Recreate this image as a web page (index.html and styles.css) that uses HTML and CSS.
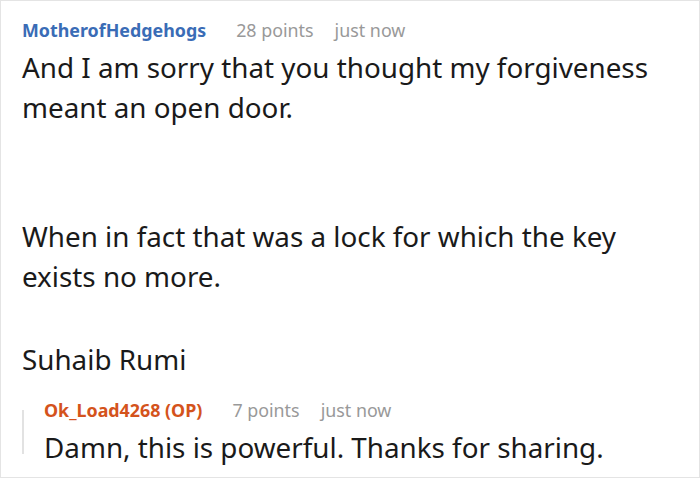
FILE: index.html
```html
<!DOCTYPE html>
<html lang="en">
<head>
<meta charset="utf-8">
<title>Comment</title>
<link rel="stylesheet" href="styles.css">
</head>
<body>
<div class="frame">
  <div class="comment">
    <div class="meta">
      <span class="author">MotherofHedgehogs</span>
      <span class="points">28 points</span>
      <span class="time">just now</span>
    </div>
    <div class="body">
      <p>And I am sorry that you thought my forgiveness meant an open door.</p>
      <p class="gap-lg">When in fact that was a lock for which the key exists no more.</p>
      <p class="gap">Suhaib Rumi</p>
    </div>
    <div class="reply">
      <div class="thread-line"></div>
      <div class="reply-content">
        <div class="meta">
          <span class="author op">Ok_Load4268 (OP)</span>
          <span class="points">7 points</span>
          <span class="time">just now</span>
        </div>
        <div class="body">
          <p>Damn, this is powerful. Thanks for sharing.</p>
        </div>
      </div>
    </div>
  </div>
</div>
</body>
</html>
```
FILE: styles.css
```css
html, body {
  margin: 0;
  padding: 0;
  background: #fff;
}

.frame {
  width: 700px;
  height: 478px;
  box-sizing: border-box;
  border: 1px solid #e4e4e4;
  padding: 17px 22px 0 21px;
  font-family: "Noto Sans", "Open Sans", sans-serif;
  overflow: hidden;
}

.meta {
  display: flex;
  align-items: baseline;
  font-size: 17.85px;
  line-height: 24px;
  height: 24px;
  white-space: nowrap;
}

.author {
  font-weight: 700;
  color: #3a6cb6;
}

.author.op {
  color: #d4531c;
}

.points {
  color: #999;
  margin-left: 30px;
}

.time {
  color: #999;
  margin-left: 21px;
}

.body {
  margin-top: 5px;
  font-size: 27.8px;
  line-height: 40px;
  color: #1a1a1a;
}

.body p {
  margin: 0;
}

.body p.gap-lg {
  margin-top: 89px;
}

.body p.gap {
  margin-top: 43px;
}

.reply {
  display: flex;
  margin-top: 19px;
}

.thread-line {
  flex: none;
  width: 2px;
  height: 44px;
  margin-top: 12px;
  margin-right: 20px;
  background: #e2e2e2;
}
```
